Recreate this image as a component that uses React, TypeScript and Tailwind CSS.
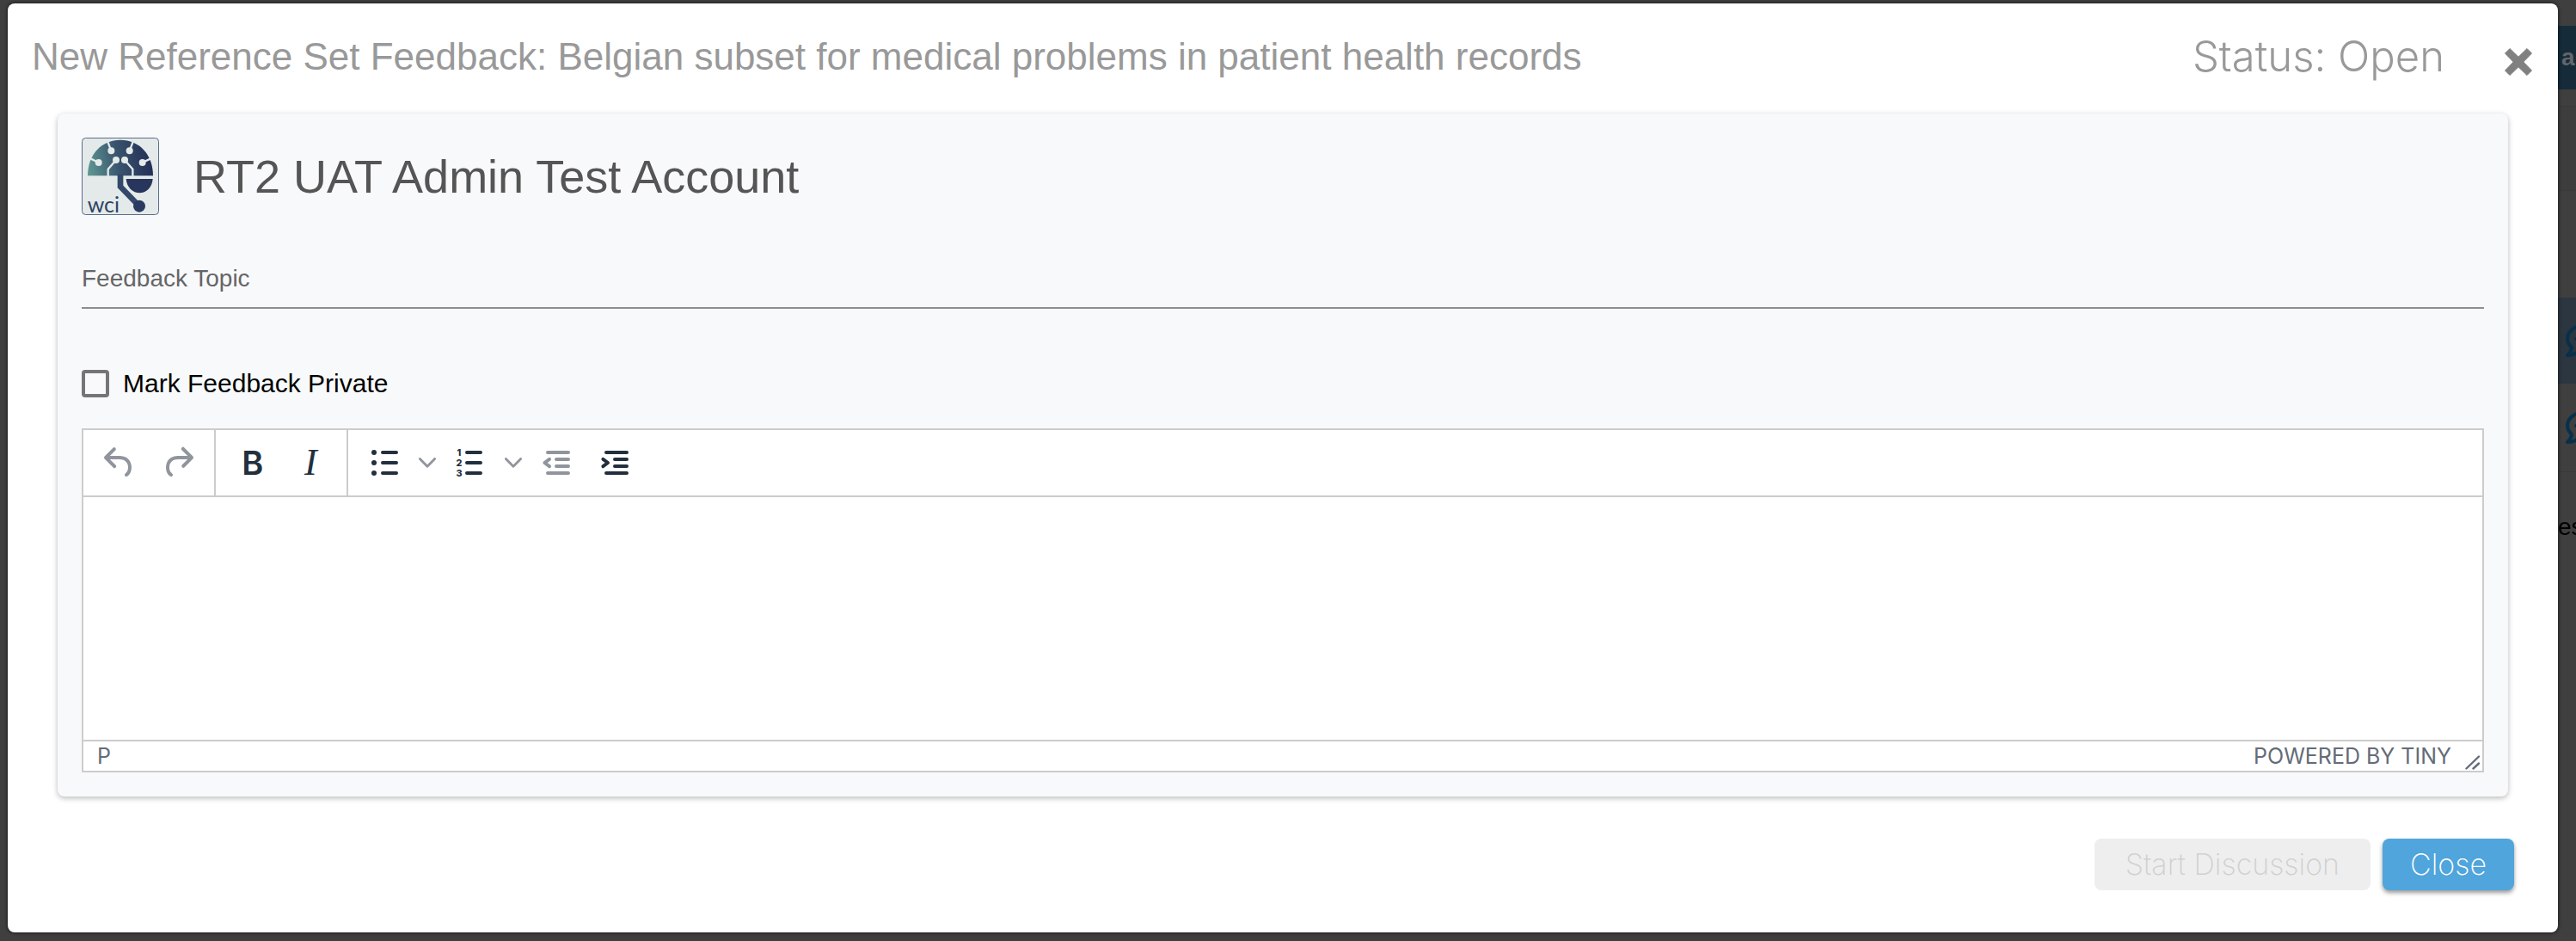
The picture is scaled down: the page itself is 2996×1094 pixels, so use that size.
import type { ReactNode } from "react";
import clsx from "clsx";

function WciLogo() {
  return (
    <svg viewBox="45 30 270 270" className="size-[90px] shrink-0 overflow-visible" role="img" aria-label="wci">
      <defs>
        <linearGradient id="wci-fill" gradientUnits="userSpaceOnUse" x1="66" y1="160" x2="290" y2="120">
          <stop offset="0" stopColor="#5f9a94" />
          <stop offset="0.5" stopColor="#39536d" />
          <stop offset="1" stopColor="#232f57" />
        </linearGradient>
      </defs>
      <rect x="46.5" y="31.5" width="267" height="267" rx="12" fill="#e3eae9" stroke="#5b6c88" strokeWidth="3" />
      <path d="M66 163C66 88 115 38 180 38S294 88 294 163Z" fill="url(#wci-fill)" />
      {/* circuit nodes */}
      <g fill="none" stroke="#e3eae9" strokeWidth="7">
        <path d="M148 76 135 42M212 76 225 42M104 117 76 103M257 117 286 103" />
        <path d="M165 108 137 140V166M195 108 223 140V166" />
      </g>
      <g fill="#e3eae9">
        <circle cx="148" cy="76" r="12" />
        <circle cx="212" cy="76" r="12" />
        <circle cx="104" cy="117" r="12" />
        <circle cx="257" cy="117" r="12" />
        <circle cx="165" cy="108" r="12" />
        <circle cx="195" cy="108" r="12" />
      </g>
      <path d="M200 174H293C291 204 270 223 247 223S202 204 200 174Z" fill="#28355c" />
      <path d="M180 158V201L244 267" fill="none" stroke="#34496a" strokeWidth="20" />
      <circle cx="246" cy="269" r="21" fill="#2b3a61" />
      <text x="65" y="290" fontSize="75" fill="#2f4366" fontFamily="Lato, sans-serif">
        wci
      </text>
    </svg>
  );
}

function ToolIcon({ children }: { children: ReactNode }) {
  return (
    <svg viewBox="0 0 24 24" className="size-12" fill="currentColor" aria-hidden="true">
      {children}
    </svg>
  );
}

function ToolButton({ label, disabled, children }: { label: string; disabled?: boolean; children: ReactNode }) {
  return (
    <button
      type="button"
      aria-label={label}
      disabled={disabled}
      className={clsx("w-[68px] h-[76px] flex items-center justify-center", disabled ? "text-[#90959d]" : "text-[#222f3e]")}
    >
      <ToolIcon>{children}</ToolIcon>
    </button>
  );
}

function ChevronButton({ label }: { label: string }) {
  return (
    <button type="button" aria-label={label} className="w-8 h-[76px] flex items-center justify-center text-[#90959d]">
      <svg viewBox="0 0 20 12" className="w-5 h-3" fill="none" stroke="currentColor" strokeWidth="2.8" strokeLinecap="round" strokeLinejoin="round" aria-hidden="true">
        <path d="M1.4 1.4 10 10.2 18.6 1.4" />
      </svg>
    </button>
  );
}

function ListBars({ x }: { x: number }) {
  return <path d={`M${x} 6h8M${x} 12h8M${x} 18h8`} fill="none" stroke="currentColor" strokeWidth="2" strokeLinecap="round" />;
}

function Toolbar() {
  return (
    <div className="flex border-b-2 border-[#cccccc]">
      <div className="flex px-2 border-r-2 border-[#cccccc]">
        <ToolButton label="Undo" disabled>
          <path d="M6.4 8H12c3.7 0 6.2 2 6.8 5.1.6 2.7-.4 5.6-2.3 6.8a1 1 0 0 1-1-1.8c1.1-.6 1.8-2.7 1.4-4.6-.5-2.1-2.1-3.5-4.9-3.5H6.4l3.3 3.3a1 1 0 1 1-1.4 1.4l-5-5a1 1 0 0 1 0-1.4l5-5a1 1 0 0 1 1.4 1.4L6.4 8Z" />
        </ToolButton>
        <ToolButton label="Redo" disabled>
          <path d="M17.6 10H12c-2.8 0-4.4 1.4-4.9 3.5-.4 2 .3 4 1.4 4.6a1 1 0 1 1-1 1.8c-2-1.2-2.9-4.1-2.3-6.8.6-3 3-5.1 6.8-5.1h5.6l-3.3-3.3a1 1 0 1 1 1.4-1.4l5 5a1 1 0 0 1 0 1.4l-5 5a1 1 0 0 1-1.4-1.4l3.3-3.3Z" />
        </ToolButton>
      </div>
      <div className="flex px-2 border-r-2 border-[#cccccc]">
        <ToolButton label="Bold">
          <text x="12.4" y="19" textAnchor="middle" fontSize="19" fontWeight="600" fontFamily="Inter, sans-serif">
            B
          </text>
        </ToolButton>
        <ToolButton label="Italic">
          <text x="12.2" y="19" textAnchor="middle" fontSize="22" fontStyle="italic" fontFamily="'Liberation Serif', serif">
            I
          </text>
        </ToolButton>
      </div>
      <div className="flex px-2">
        <ToolButton label="Bullet list">
          <circle cx="6" cy="6" r="1.5" />
          <circle cx="6" cy="12" r="1.5" />
          <circle cx="6" cy="18" r="1.5" />
          <ListBars x={11} />
        </ToolButton>
        <ChevronButton label="Bullet list styles" />
        <ToolButton label="Numbered list">
          <g fontSize="5.4" fontWeight="800" fontFamily="Inter, sans-serif" textAnchor="middle">
            <text x="5.5" y="8">1</text>
            <text x="5.5" y="14">2</text>
            <text x="5.5" y="20">3</text>
          </g>
          <ListBars x={10} />
        </ToolButton>
        <ChevronButton label="Numbered list styles" />
        <ToolButton label="Decrease indent" disabled>
          <g fill="none" stroke="currentColor" strokeWidth="2" strokeLinecap="round">
            <path d="M7 6h12M12 10h7M12 14h7M7 18h12" />
            <path d="M8 9.9 5.2 12 8 14.1" strokeLinejoin="round" />
          </g>
        </ToolButton>
        <ToolButton label="Increase indent">
          <g fill="none" stroke="currentColor" strokeWidth="2" strokeLinecap="round">
            <path d="M7 6h12M12 10h7M12 14h7M7 18h12" />
            <path d="M5.2 9.9 8 12 5.2 14.1" strokeLinejoin="round" />
          </g>
        </ToolButton>
      </div>
    </div>
  );
}

function Editor() {
  return (
    <div className="mt-9 bg-white border-2 border-[#cccccc]">
      <Toolbar />
      <textarea aria-label="Feedback" className="block w-full h-[282px] px-5 py-4 text-[28px] resize-none outline-none" />
      <div className="h-9 border-t-2 border-[#cccccc] flex items-center pl-4 font-[Inter,sans-serif] text-[25px] leading-[34px] text-[#646c78]">
        <span>P</span>
        <a href="#tiny" className="ml-auto">
          POWERED BY TINY
        </a>
        <svg viewBox="0 0 18 18" className="size-[18px] ml-4 mr-0.5 self-end" fill="none" stroke="currentColor" strokeWidth="2.4" strokeLinecap="round" aria-hidden="true">
          <path d="M1.5 15.5 16 1.5M9.5 15.5 16 9.5" />
        </svg>
      </div>
    </div>
  );
}

function CommentIcon() {
  return (
    <svg viewBox="0 0 48 40" className="w-12 h-10 shrink-0 ml-[9px]" fill="none" stroke="#07304a" strokeWidth="4" strokeLinejoin="round" aria-hidden="true">
      <path d="M24 2C11 2 2 9 2 18c0 4 2 7 5 10 0 3-2 6-5 9 5 0 9-1 12-4 3 1 6 2 10 2 13 0 22-8 22-17S37 2 24 2Z" />
      <path d="M12 18h2M23 18h2M34 18h2" strokeLinecap="round" />
    </svg>
  );
}

// Slice of the page that stays visible beside the dialog
function PageBehind() {
  return (
    <div className="ml-auto w-[21px] overflow-hidden text-[28px] leading-8">
      <div className="h-[30px]" />
      <div className="h-[74px] bg-[#152b3a] flex items-center pl-1 font-bold text-[#62666a]">a</div>
      <div className="h-5 border-b border-[#393939]" />
      <div className="h-[98px] border-b border-[#393939] bg-[#3d3d3d]" />
      <div className="h-[124px]" />
      <div className="h-[100px] bg-[#2c3640] flex items-center">
        <CommentIcon />
      </div>
      <div className="h-[103px] border-b border-[#383838] flex items-center">
        <CommentIcon />
      </div>
      <div className="pt-12 text-black">es</div>
    </div>
  );
}

export default function App() {
  return (
    <div className="relative min-h-screen bg-[#3f3f3f] font-['Liberation_Sans',Arial,sans-serif]">
      <PageBehind />
      <div className="absolute inset-x-0 top-0 pt-1 pb-[10px] pl-[9px] pr-[21px]">
        <div
          role="dialog"
          aria-labelledby="feedback-title"
          className="bg-white rounded-lg shadow-[0_0_3px_2px_rgba(0,0,0,0.3)] pb-[49px]"
        >
          <div className="h-32 pt-[30px] pl-7 pr-[30px] flex items-start text-[#999999]">
            <h2 id="feedback-title" className="text-[44px] leading-[64px]">
              New Reference Set Feedback: Belgian subset for medical problems in patient health records
            </h2>
            <span className="ml-auto font-[Inter,sans-serif] font-light text-[49px] leading-[64px]">Status: Open</span>
            <button type="button" aria-label="Close dialog" className="ml-[70px] h-[76px] flex items-center">
              <svg viewBox="0 0 32 32" className="size-8" fill="#808080" aria-hidden="true">
                <path d="M6 .5 16 10.200 26 .5 31.500 6 21.800 16 31.500 26 26 31.500 16 21.800 6 31.500.5 26 10.200 16 .5 6Z" stroke="#808080" strokeLinejoin="round" />
              </svg>
            </button>
          </div>

          <div className="mx-[58px] p-7 rounded-lg bg-[#f8f9fb] shadow-[0_2px_6px_rgba(0,0,0,0.28)]">
            <div className="flex items-center gap-10">
              <WciLogo />
              <h3 className="text-[54px] leading-[64px] text-[#555555]">RT2 UAT Admin Test Account</h3>
            </div>

            <div className="mt-[54px] pb-[13px] flex border-b-2 border-[#8c8e90] text-[28px] leading-10">
              <label htmlFor="topic" className="text-[#666666] whitespace-nowrap">
                Feedback Topic
              </label>
              <input id="topic" type="text" className="flex-1 ml-4 outline-none" />
            </div>

            <div className="mt-[71px] h-8 flex items-center gap-4">
              <input
                id="private"
                type="checkbox"
                className="appearance-none size-8 border-4 border-[#757575] rounded-sm checked:bg-[#757575]"
              />
              <label htmlFor="private" className="text-[30px] leading-8 text-black">
                Mark Feedback Private
              </label>
            </div>

            <Editor />
          </div>

          <div className="mt-[49px] pr-[51px] flex justify-end gap-[14px] font-[Inter,sans-serif] font-extralight text-[34px] leading-[60px]">
            <button type="button" disabled className="px-9 rounded-lg bg-[#eeeeee] text-[#d0d0d0]">
              Start Discussion
            </button>
            <button type="button" className="px-8 rounded-lg bg-[#50a5dc] text-white shadow-[0_3px_5px_rgba(0,0,0,0.4)]">
              Close
            </button>
          </div>
        </div>
      </div>
    </div>
  );
}
